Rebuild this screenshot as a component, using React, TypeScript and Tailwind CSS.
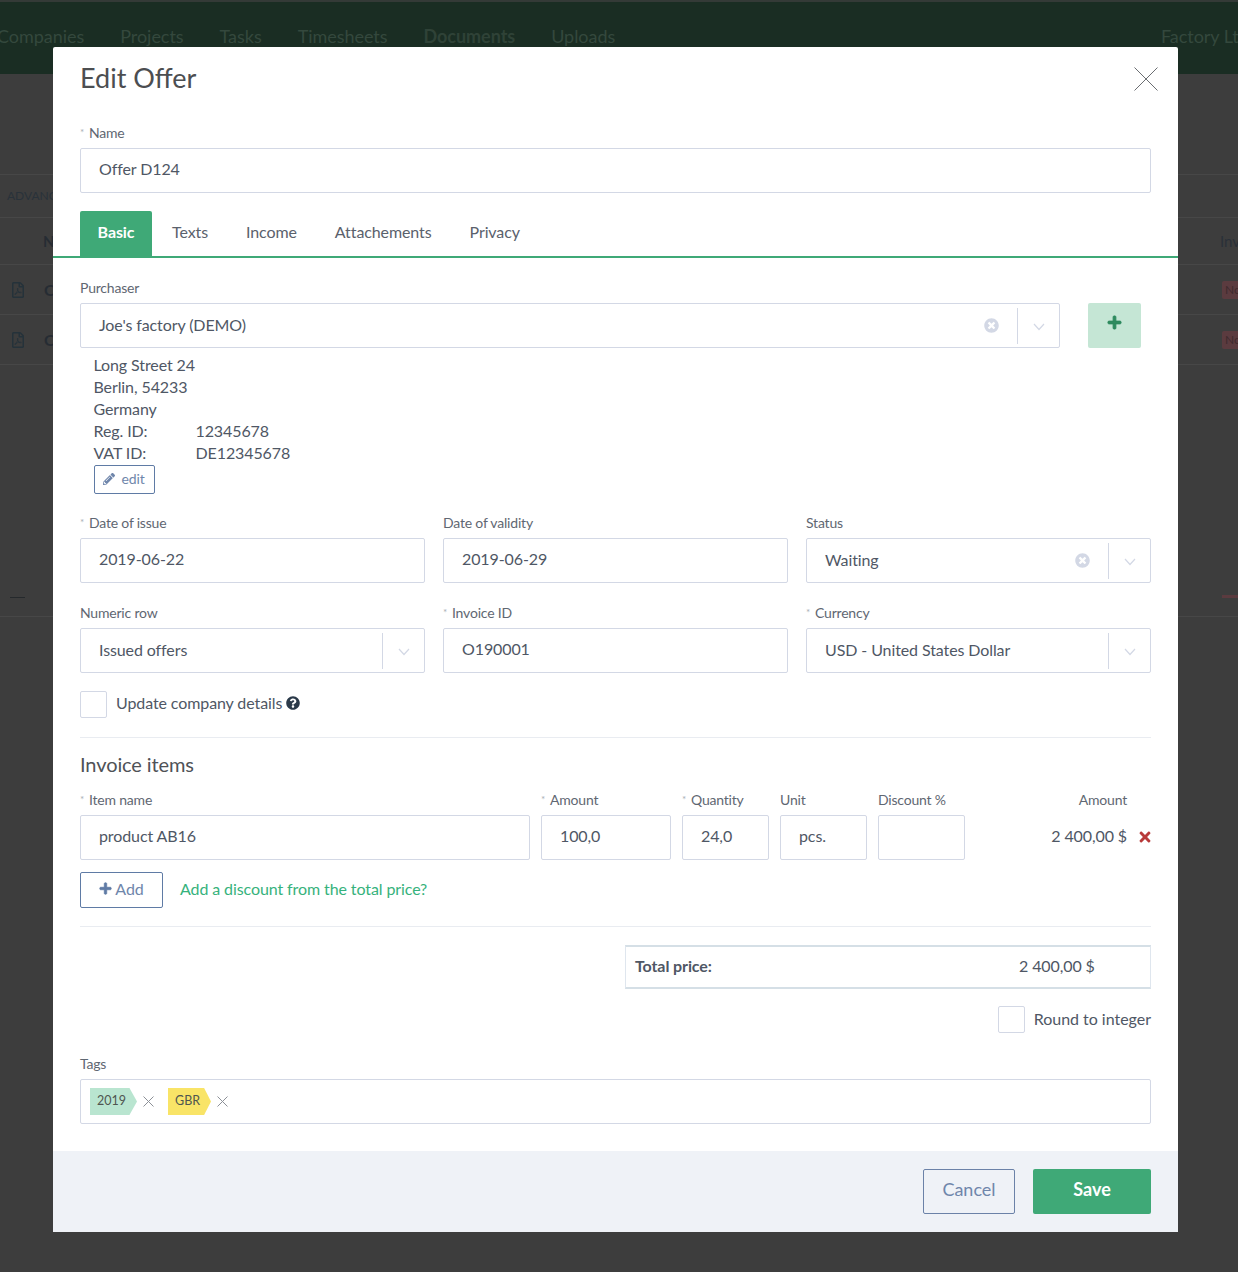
import React from "react";
import {
  FaPencilAlt,
  FaPlus,
  FaQuestionCircle,
  FaRegFilePdf,
  FaTimes,
  FaTimesCircle,
} from "react-icons/fa";

const inputClass =
  "h-[45px] w-full rounded-[2px] border border-[#d3d8e5] bg-white flex items-center pl-[18px] pb-[4px] text-[16px] tracking-[-0.1px] text-[#4f5765]";

const Label = ({ text, required }: { text: string; required?: boolean }) => (
  <div className="h-5 mb-[5px] flex items-center text-[14px] tracking-[-0.2px] leading-5 text-[#5f6772] whitespace-nowrap">
    {required && <span className="w-[9px] text-[10px] text-[#a9adb5] -mt-[3px]">*</span>}
    {text}
  </div>
);

const Chevron = () => (
  <svg width="12" height="8" viewBox="0 0 12 8" fill="none" stroke="#d3d8e5" strokeWidth="1.2">
    <path d="M1 1l5 5.5L11 1" />
  </svg>
);

// select de mentira: texto, limpar (opcional), divisor e seta
const Select = ({ value, clearable }: { value: string; clearable?: boolean }) => (
  <div className="h-[45px] w-full rounded-[2px] border border-[#d3d8e5] bg-white flex items-center pl-[18px] text-[16px] tracking-[-0.1px] text-[#4f5765]">
    <span className="flex-1 whitespace-nowrap pb-[1px]">{value}</span>
    {clearable && <FaTimesCircle className="mr-[18px] text-[15px] text-[#d3d8e5]" />}
    <span className="h-[36px] w-px bg-[#d3d8e5]" />
    <span className="w-[41px] flex justify-center pt-[2px]">
      <Chevron />
    </span>
  </div>
);

const Field = ({ label, value, required }: { label: string; value: string; required?: boolean }) => (
  <div>
    <Label text={label} required={required} />
    <div className={inputClass}>{value}</div>
  </div>
);

const Tag = ({ text, className }: { text: string; className: string }) => (
  <div className="flex items-center">
    <span
      className={`h-[27px] flex items-center pl-[7px] pb-[1px] text-[12.5px] text-[#4f5650] [clip-path:polygon(0_0,84%_0,100%_50%,84%_100%,0_100%)] ${className}`}
    >
      {text}
    </span>
    <svg className="ml-[6px]" width="11" height="11" viewBox="0 0 11 11" stroke="#8c9097" strokeWidth="1">
      <path d="M.5.5l10 10M10.5.5l-10 10" />
    </svg>
  </div>
);

const BackgroundRow = () => (
  <div className="h-[50px] border-b border-[#474747] flex items-center justify-between pl-[10px]">
    <div className="flex items-center">
      <FaRegFilePdf className="text-[16px] text-[#25323a]" />
      <span className="ml-[18px] text-[16px] font-bold text-[#262c33]">Offer</span>
    </div>
    <span className="w-[16px] h-[18px] rounded-l-[2px] bg-[#5b3b3f] pl-[3px] text-[12px] leading-[18px] text-[#3f2a2e] overflow-hidden">
      No
    </span>
  </div>
);

const App = () => {
  return (
    <div className="relative h-[1272px] w-[1238px] overflow-hidden bg-[#3d3d3d] font-['Lato',sans-serif]">
      {/* Pagina por tras do modal */}
      <div className="h-[74px] border-t-2 border-[#343a37] bg-[#1a2d23] flex items-center justify-between pb-[3px] text-[18px] tracking-[-0.04px] text-[#34483d] whitespace-nowrap">
        <div className="flex gap-[36px] -ml-[3px]">
          <span>Companies</span>
          <span>Projects</span>
          <span>Tasks</span>
          <span>Timesheets</span>
          <span className="font-bold text-[#2f4237]">Documents</span>
          <span>Uploads</span>
        </div>
        <span className="w-[77px]">Factory Ltd</span>
      </div>
      <div className="mt-[100px] h-[44px] border-y border-[#474747] flex items-center pl-[7px] text-[12px] text-[#29323a] whitespace-nowrap">
        ADVANCED
      </div>
      <div className="h-[47px] border-b border-[#474747] flex items-center justify-between pl-[43px] text-[15px] font-bold text-[#262c33]">
        <span>Name</span>
        <span className="w-[18px] overflow-hidden font-normal text-[#2a3038]">Invoice</span>
      </div>
      <BackgroundRow />
      <BackgroundRow />
      <div className="h-[252px] border-b border-[#474747] flex items-end justify-between pb-[18px] pl-[10px]">
        <span className="h-px w-[15px] bg-[#25292c]" />
        <span className="h-[3px] w-[16px] bg-[#5b3b3f]" />
      </div>

      {/* Modal */}
      <div className="absolute left-[53px] top-[47px] w-[1125px] rounded-t-[2px] bg-white">
        <div className="h-[76px] px-[27px] pt-[15px] flex justify-between">
          <h1 className="text-[27px] leading-8 text-[#4c4e51]">Edit Offer</h1>
          <svg className="mt-[5px] mr-[-7px]" width="24" height="24" viewBox="0 0 24 24" stroke="#6a6d71" strokeWidth="1">
            <path d="M.5.5l23 23M23.5.5l-23 23" />
          </svg>
        </div>

        <div className="px-[27px]">
          <Field label="Name" value="Offer D124" required />
        </div>

        {/* Abas */}
        <div className="mt-[18px] h-[47px] border-b-2 border-[#3fa977] px-[27px] flex text-[16px] tracking-[-0.1px] text-[#5a616c]">
          <div className="w-[72px] h-[45px] rounded-t-[2px] bg-[#3fa977] flex items-center justify-center pb-[4px] font-bold text-white">
            Basic
          </div>
          <div className="ml-5 h-[45px] flex items-center gap-[38px] pb-[4px]">
            <span>Texts</span>
            <span>Income</span>
            <span>Attachements</span>
            <span>Privacy</span>
          </div>
        </div>

        <div className="px-[27px] pt-5">
          <Label text="Purchaser" />
          <div className="flex items-start">
            <div className="w-[980px]">
              <Select value="Joe's factory (DEMO)" clearable />
            </div>
            <div className="ml-[28px] h-[45px] w-[53px] rounded-[2px] bg-[#c5e6d5] flex items-center justify-center pb-[6px]">
              <FaPlus className="text-[15px] text-[#2f8b5f]" stroke="currentColor" strokeWidth="30" />
            </div>
          </div>

          <div className="mt-[6px] pl-[13.5px] text-[16px] tracking-[-0.1px] leading-[22px] text-[#4f5765]">
            <div>Long Street 24</div>
            <div>Berlin, 54233</div>
            <div>Germany</div>
            <div className="flex">
              <span className="w-[102px]">Reg. ID:</span>
              <span>12345678</span>
            </div>
            <div className="flex">
              <span className="w-[102px]">VAT ID:</span>
              <span>DE12345678</span>
            </div>
            <button className="mt-[1px] h-[29px] w-[61px] rounded-[2px] border border-[#5f7ba5] flex items-center justify-center gap-[6px] pb-[2px] text-[14px] text-[#6f86ab]">
              <FaPencilAlt className="text-[12px]" />
              edit
            </button>
          </div>

          <div className="mt-[19px] grid grid-cols-3 gap-x-[18px] gap-y-5">
            <Field label="Date of issue" value="2019-06-22" required />
            <Field label="Date of validity" value="2019-06-29" />
            <div>
              <Label text="Status" />
              <Select value="Waiting" clearable />
            </div>
            <div>
              <Label text="Numeric row" />
              <Select value="Issued offers" />
            </div>
            <Field label="Invoice ID" value="O190001" required />
            <div>
              <Label text="Currency" required />
              <Select value="USD - United States Dollar" />
            </div>
          </div>

          <div className="mt-[18px] h-[27px] flex items-center text-[16px] tracking-[-0.1px] text-[#4f5765]">
            <span className="h-[27px] w-[27px] rounded-[2px] border border-[#d3d8e5]" />
            <span className="ml-[9px] pb-[3px] leading-[22px]">Update company details</span>
            <FaQuestionCircle className="ml-[4px] mb-[3px] text-[14px] text-[#2b3a4a]" />
          </div>

          <div className="mt-[19px] h-px bg-[#e9ecf1]" />

          <h2 className="mt-[12px] h-[29px] text-[20px] tracking-[-0.1px] leading-[28px] text-[#4f5257]">Invoice items</h2>

          <div className="mt-[11px] flex gap-[11px]">
            <div className="w-[450px]">
              <Field label="Item name" value="product AB16" required />
            </div>
            <div className="w-[130px]">
              <Field label="Amount" value="100,0" required />
            </div>
            <div className="w-[87px]">
              <Field label="Quantity" value="24,0" required />
            </div>
            <div className="w-[87px]">
              <Field label="Unit" value="pcs." />
            </div>
            <div className="w-[87px]">
              <Field label="Discount %" value="" />
            </div>
            <div className="flex-1">
              <div className="h-5 mb-[5px] pr-[24px] text-right text-[14px] tracking-[-0.2px] leading-5 text-[#5f6772]">Amount</div>
              <div className="h-[45px] flex items-center justify-end text-[16px] tracking-[-0.1px] text-[#4f5765]">
                <span className="pb-[4px]">2 400,00 $</span>
                <FaTimes className="ml-[10px] -mr-[2px] mb-[1px] text-[16px] text-[#b83a3a]" />
              </div>
            </div>
          </div>

          <div className="mt-[12px] flex items-center">
            <button className="h-[36px] w-[83px] rounded-[2px] border border-[#5f7ba5] flex items-center justify-center gap-[3px] pb-[3px] text-[16px] tracking-[-0.1px] text-[#6f86ab]">
              <FaPlus className="text-[13px] text-[#5f7ba5]" stroke="currentColor" strokeWidth="30" />
              Add
            </button>
            <span className="ml-[17px] pb-[2px] text-[16px] tracking-[-0.1px] text-[#36b27c]">Add a discount from the total price?</span>
          </div>

          <div className="mt-[18px] h-px bg-[#e9ecf1]" />

          <div className="mt-[18px] flex justify-end">
            <div className="h-[44px] w-[526px] border border-[#dfe6ee] border-y-2 border-y-[#d5dfe6] flex items-center pl-[9px] pb-[2px] text-[16px] tracking-[-0.1px] text-[#4f5765]">
              <span className="w-[384px] font-bold">Total price:</span>
              <span>2 400,00 $</span>
            </div>
          </div>

          <div className="mt-[17px] flex items-center justify-end text-[16px] text-[#4f5765]">
            <span className="h-[27px] w-[27px] rounded-[2px] border border-[#d3d8e5]" />
            <span className="ml-[9px] pb-[2px] tracking-[-0.02px]">Round to integer</span>
          </div>

          <div className="mt-[21px]">
            <Label text="Tags" />
            <div className="h-[45px] rounded-[2px] border border-[#d3d8e5] flex items-center gap-[14px] pl-[9px]">
              <Tag text="2019" className="w-[47px] bg-[#b9e5d0]" />
              <Tag text="GBR" className="w-[43px] bg-[#f9e467]" />
            </div>
          </div>
        </div>

        {/* Rodape */}
        <div className="mt-[27px] h-[81px] bg-[#eff2f7] pr-[27px] pt-[18px] flex justify-end gap-[18px]">
          <button className="h-[45px] w-[92px] rounded-[2px] border border-[#6b82a8] pb-[4px] text-[18px] text-[#6f86ab]">
            Cancel
          </button>
          <button className="h-[45px] w-[118px] rounded-[2px] bg-[#3fa977] pb-[4px] text-[18px] font-bold text-white">
            Save
          </button>
        </div>
      </div>
    </div>
  );
};

export default App;
